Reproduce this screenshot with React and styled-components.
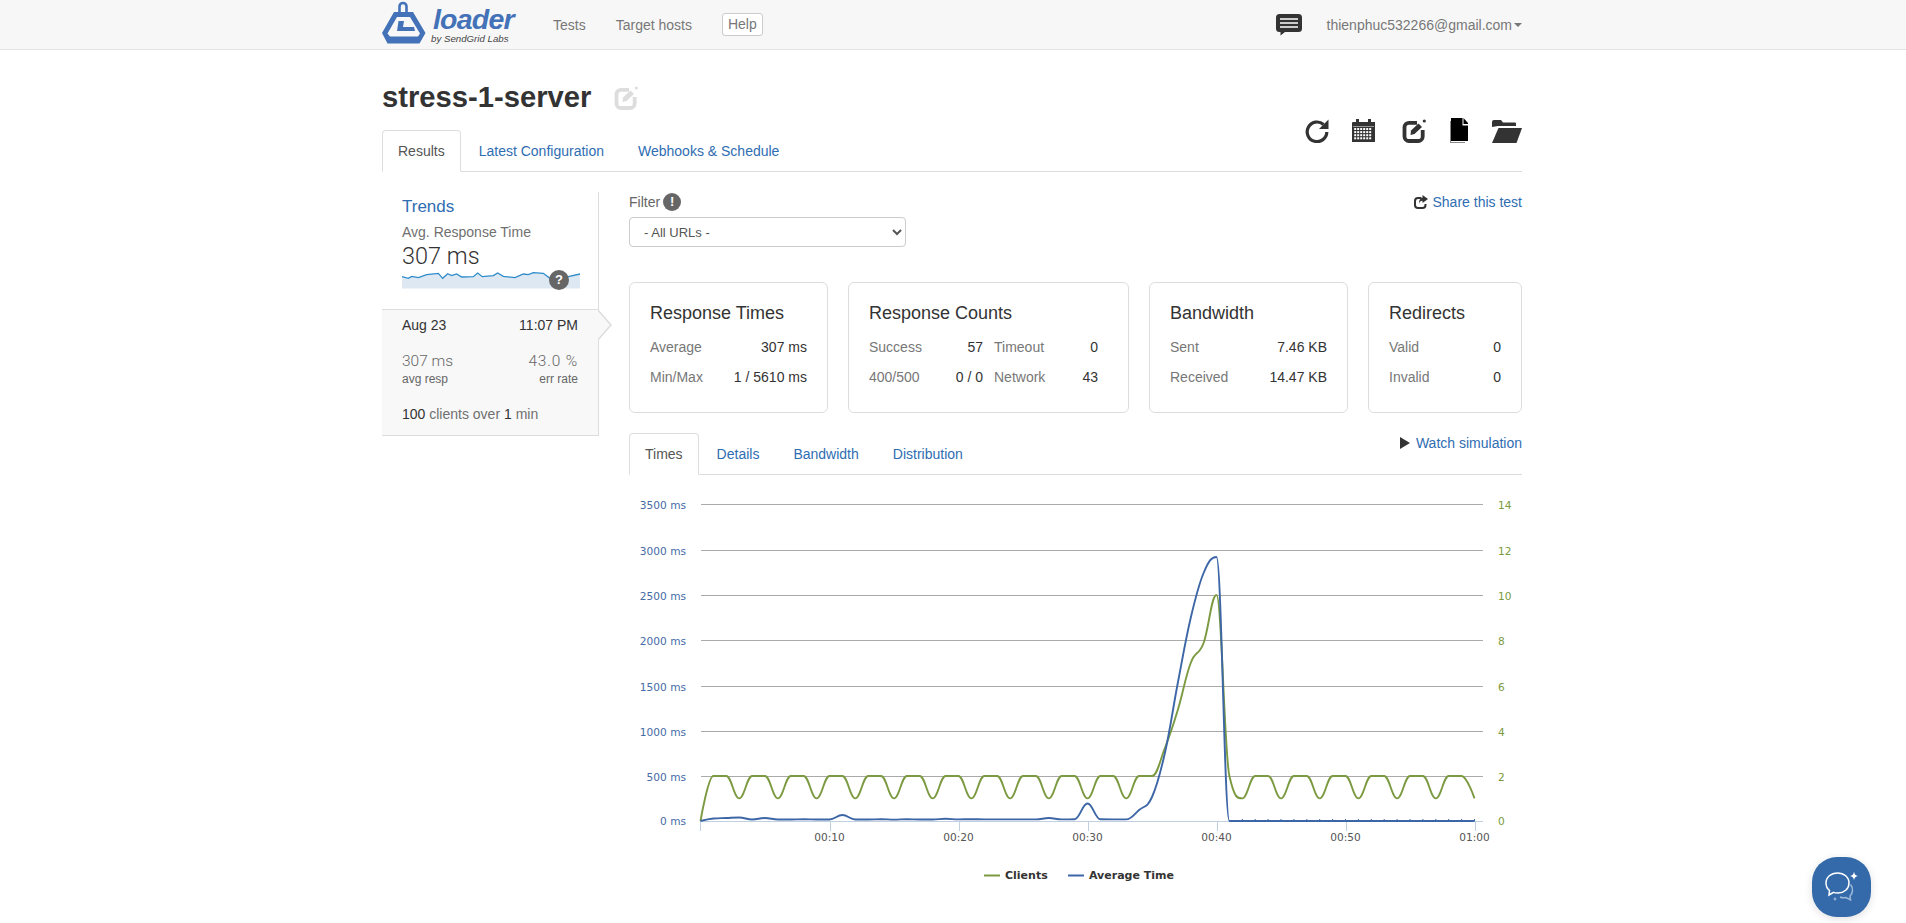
import React from 'react';
import styled, { createGlobalStyle } from 'styled-components';

const Global = createGlobalStyle`
  * { box-sizing: border-box; }
  html, body { margin: 0; background: #fff; }
  body { font-family: "Liberation Sans", Arial, sans-serif; font-size: 14px; line-height: 20px; color: #333; }
`;

const LINK = '#2f6db2';
const GREEN = '#7b9a41';
const BLUE = '#3d66a6';

const Container = styled.div`
  width: 1142px;
  margin: 0 auto;
  padding-right: 2px;
`;
const NavBar = styled.header`
  height: 50px;
  background: #f7f7f7;
  border-bottom: 1px solid #e3e3e3;
`;
const NavInner = styled(Container)`
  height: 49px;
  display: flex;
  align-items: center;
`;
const Logo = styled.div`
  display: flex;
  align-items: flex-start;
  width: 132px;
  height: 49px;
  margin-right: 39px;
`;
const LogoWords = styled.div`
  display: flex;
  flex-direction: column;
  margin-left: 7px;
  padding-top: 6px;
`;
const LogoName = styled.span`
  font-size: 28.5px;
  line-height: 27px;
  font-weight: 700;
  font-style: italic;
  letter-spacing: -0.8px;
  color: #4472b8;
`;
const LogoBy = styled.span`
  font-size: 9.7px;
  line-height: 12px;
  font-style: italic;
  color: #444;
  margin-left: -2px;
`;
const NavLinks = styled.nav`
  display: flex;
  align-items: center;
  gap: 30px;
`;
const NavLink = styled.a`
  color: #777;
`;
const HelpButton = styled.a`
  height: 23px;
  padding: 0 5px;
  line-height: 21px;
  color: #777;
  background: #fff;
  border: 1px solid #ccc;
  border-radius: 3px;
`;
const NavRight = styled.div`
  margin-left: auto;
  display: flex;
  align-items: center;
  gap: 25px;
`;
const Account = styled.a`
  display: flex;
  align-items: center;
  color: #777;
`;
const Caret = styled.span`
  width: 0;
  height: 0;
  margin-left: 2px;
  border-top: 4px solid #777;
  border-left: 4px solid transparent;
  border-right: 4px solid transparent;
`;
const Title = styled.div`
  display: flex;
  align-items: center;
  margin-top: 31px;
  margin-bottom: 16px;
  height: 33px;
`;
const TitleText = styled.h1`
  margin: 0;
  font-size: 29.2px;
  line-height: 33px;
  font-weight: 700;
  color: #333;
`;
const TitleEdit = styled.span`
  display: flex;
  margin-left: 23px;
  margin-top: 1px;
`;
const TabBar = styled.div`
  display: flex;
  justify-content: space-between;
  align-items: flex-start;
  height: 42px;
  border-bottom: 1px solid #ddd;
`;
const Tabs = styled.div`
  display: flex;
  gap: 2px;
`;
const Tab = styled.a`
  height: 42px;
  padding: 10px 15px;
  border: 1px solid ${p => (p.$active ? '#ddd' : 'transparent')};
  border-bottom-color: ${p => (p.$active ? '#fff' : 'transparent')};
  border-radius: 4px 4px 0 0;
  background: ${p => (p.$active ? '#fff' : 'transparent')};
  color: ${p => (p.$active ? '#555' : LINK)};
`;
const Toolbar = styled.div`
  display: flex;
  align-items: flex-start;
  margin-top: -12px;
`;
const ToolIcon = styled.span`
  display: flex;
  margin-left: ${p => p.$gap}px;
  margin-top: ${p => p.$top || 0}px;
`;
const Content = styled.div`
  display: flex;
  gap: 30px;
`;
const Side = styled.aside`
  width: 217px;
  flex: none;
  margin-top: 20px;
`;
const Trend = styled.div`
  height: 117px;
  padding: 5px 18px 0 20px;
  border-right: 1px solid #ddd;
`;
const TrendTitle = styled.a`
  display: block;
  font-size: 17px;
  line-height: 20px;
  color: ${LINK};
  margin-bottom: 5px;
`;
const TrendLabel = styled.div`
  color: #707070;
`;
const LightNumber = styled.div`
  font-family: Roboto, "Liberation Sans", sans-serif;
  font-weight: 300;
  font-size: ${p => p.$size}px;
  line-height: ${p => p.$line}px;
  letter-spacing: ${p => p.$spread || 0}px;
  color: ${p => p.$color};
`;
const Spark = styled.div`
  position: relative;
  width: 178px;
  height: 19px;
`;
const Badge = styled.span`
  position: ${p => (p.$over ? 'absolute' : 'static')};
  right: 11px;
  top: 0;
  width: ${p => p.$size}px;
  height: ${p => p.$size}px;
  border-radius: 50%;
  background: #666;
  color: #fff;
  font-size: 13px;
  font-weight: 700;
  line-height: ${p => p.$size}px;
  text-align: center;
`;
const Run = styled.div`
  position: relative;
  height: 127px;
  padding: 5px 20px 0 20px;
  background: #f8f8f8;
  border: 1px solid #ddd;
  border-left: 0;
  &::before, &::after {
    content: "";
    position: absolute;
    top: -1px;
    width: 0;
    height: 0;
    border-top: 16px solid transparent;
    border-bottom: 16px solid transparent;
  }
  &::before { left: 100%; border-left: 14px solid #ddd; }
  &::after { left: calc(100% - 2px); border-left: 14px solid #f8f8f8; }
`;
const RunRow = styled.div`
  display: flex;
  justify-content: space-between;
  margin-top: ${p => p.$top || 0}px;
`;
const RunSmall = styled.span`
  font-size: 12px;
  line-height: 16px;
  color: #666;
`;
const RunSummary = styled.div`
  margin-top: 17px;
  color: #707070;
  & b { font-weight: 400; color: #333; }
`;
const Main = styled.main`
  width: 893px;
  flex: none;
`;
const FilterRow = styled.div`
  display: flex;
  justify-content: space-between;
  margin-top: 20px;
`;
const FilterLabel = styled.div`
  display: flex;
  align-items: center;
  gap: 3px;
  color: #666;
`;
const InlineLink = styled.a`
  display: flex;
  align-items: center;
  gap: ${p => p.$gap}px;
  color: ${LINK};
`;
const Select = styled.select`
  display: block;
  width: 277px;
  height: 30px;
  margin-top: 5px;
  padding: 5px 10px;
  font-family: "Liberation Sans", Arial, sans-serif;
  font-size: 13px;
  color: #555;
  background: #fff;
  border: 1px solid #ccc;
  border-radius: 4px;
`;
const Cards = styled.div`
  display: flex;
  gap: 20px;
  margin-top: 35px;
  margin-bottom: 20px;
`;
const Card = styled.section`
  width: ${p => p.$w}px;
  height: 131px;
  padding: 20px;
  border: 1px solid #ddd;
  border-radius: 6px;
`;
const CardTitle = styled.h3`
  margin: 0 0 14px;
  font-size: 18px;
  line-height: 20px;
  font-weight: 400;
  color: #333;
`;
const StatGrid = styled.div`
  display: grid;
  grid-template-columns: ${p => p.$cols || '1fr'};
  column-gap: 11px;
  row-gap: 10px;
`;
const Stat = styled.div`
  display: flex;
  justify-content: space-between;
  color: #333;
`;
const StatLabel = styled.span`
  color: #777;
`;
const ChartSvg = styled.svg`
  display: block;
`;
const AxisText = styled.text`
  font-family: "DejaVu Sans", sans-serif;
  font-size: 10.6px;
  fill: ${p => p.$fill};
  text-anchor: ${p => p.$anchor};
`;
const LegendText = styled.text`
  font-family: "DejaVu Sans", sans-serif;
  font-size: 11px;
  font-weight: 700;
  fill: #333;
`;
const ChatWidget = styled.div`
  position: fixed;
  right: 35px;
  bottom: 6px;
  width: 59px;
  height: 60px;
  display: flex;
  background: #346aa9;
  border-radius: 25px;
  box-shadow: 0 2px 8px rgba(0, 0, 0, .12);
`;

const EditIcon = ({ size = 24, color = '#333' }) => (
  <svg width={size} height={size} viewBox="0 0 24 24" fill="none">
    <path d="M15 3.800H7A4.500 4.500 0 0 0 2.500 8.300v9.200A4.500 4.500 0 0 0 7 22h9.200a4.500 4.500 0 0 0 4.500-4.500V11" stroke={color} strokeWidth="3.800" />
    <path d="M9 11.500 16.500 4.500 20 8 12.500 15 8.500 16z" fill={color} />
    <circle cx="22.300" cy="2" r="1.600" fill={color} />
  </svg>
);
const RefreshIcon = () => (
  <svg width="24" height="25" viewBox="0 0 24 25" fill="none">
    <path d="M18.500 6.500A9.800 9.800 0 1 0 21.800 14" stroke="#333" strokeWidth="3.200" />
    <path d="M23.500 1.500v9.500h-9.500z" fill="#333" />
  </svg>
);
const CalendarIcon = () => {
  const cells = [];
  for (let r = 0; r < 4; r++) for (let c = 0; c < 6; c++) cells.push(<rect key={`${r}-${c}`} x={2.2 + c * 3} y={10 + r * 3.1} width="2" height="2" fill="#fff" />);
  return (
    <svg width="23" height="25" viewBox="0 0 23 25">
      <path d="M1 4h3V1h3v3h9V1h3v3h3a1 1 0 0 1 1 0v20H0V5a1 1 0 0 1 1-1z" fill="#333" />
      <rect x="1" y="8" width="21" height="1" fill="#fff" opacity=".5" />
      {cells}
    </svg>
  );
};
const FileIcon = () => (
  <svg width="19" height="25" viewBox="0 0 19 25">
    <path d="M0 3v22h15v-1H1V3z" fill="#888" />
    <path d="M1 0h11.500v7.500H18V23H1z" fill="#000" />
    <path d="M13.500 0 18 5v1h-4.500z" fill="#000" />
  </svg>
);
const FolderIcon = () => (
  <svg width="30" height="23" viewBox="0 0 30 23">
    <path d="M0 7V2a2 2 0 0 1 2-2h7l2 2.500h12a1 1 0 0 1 1 1V6H6z" fill="#333" />
    <path d="M6.500 8H30l-5.500 15H0z" fill="#333" />
  </svg>
);
const ChatIcon = () => (
  <svg width="26" height="22" viewBox="0 0 26 22">
    <path d="M3.500 0h19A3.500 3.500 0 0 1 26 3.500v11a3.500 3.500 0 0 1-3.500 3.500H9l-4.500 3.500V18h-1A3.500 3.500 0 0 1 0 14.500v-11A3.500 3.500 0 0 1 3.500 0z" fill="#333" />
    <path d="M4 5h18M4 9h18M4 13h18" stroke="#fff" strokeWidth="1.500" />
  </svg>
);
const ShareIcon = () => (
  <svg width="14" height="14" viewBox="0 0 14 14" fill="none">
    <path d="M7.500 3H4a3 3 0 0 0-3 3v4a3 3 0 0 0 3 3h4.500a3 3 0 0 0 3-3V9" stroke="#333" strokeWidth="2" />
    <path d="M8.500 0l5.500 4-5.500 4V5.800C6.500 5.800 5.500 7 5 9c-.2-3.500 1-5.800 3.500-6.200z" fill="#333" />
  </svg>
);
const PlayIcon = () => (
  <svg width="10" height="12" viewBox="0 0 10 12"><path d="M0 0l10 6-10 6z" fill="#333" /></svg>
);
const LogoMark = () => (
  <svg width="44" height="46" viewBox="0 0 44 46">
    <path d="M17.500 13V6.500a3.500 3.500 0 0 1 7 0V13" fill="none" stroke="#4472b8" strokeWidth="2.600" />
    <path fillRule="evenodd" fill="#4472b8" d="M12 12h19l12.500 21-6 10.500h-32L0 33zM15 17 5.500 33.500 8 36.500h28l2-3L28 17z" />
    <path fill="#4472b8" d="M16.500 21h5.500l-1 6h11l1 4H15z" />
  </svg>
);
const Sparkline = () => {
  const pts = [[21,125],[40,130],[50,124],[70,128],[95,119],[130,115],[143,130],[158,116],[170,122],[185,117],[200,126],[235,125],[248,114],[262,125],[295,122],[308,114],[325,124],[360,128],[385,117],[400,119],[415,113],[445,115],[465,130],[490,142],[520,125],[555,117]]
    .map(([x, y]) => [(x - 21) / 3, y / 3 - 35]);
  const line = pts.map(p => p.join(',')).join(' ');
  return (
    <svg width="178" height="19" viewBox="0 0 178 19">
      <polygon points={`0,18.500 ${line} 178,18.500`} fill="#dde8f2" />
      <polyline points={line} fill="none" stroke="#2e8bcb" strokeWidth="1.300" />
    </svg>
  );
};
const ChatBubbleIcon = () => (
  <svg width="59" height="60" viewBox="0 0 59 60" fill="none">
    <path d="M37 26c0 6-5 10-11 10-2 0-3 0-4.500-.6L17 38l.5-4.500C15 31.500 14 29 14 26c0-6 5-10 11.500-10S37 20 37 26z" stroke="#fff" strokeWidth="1.500" />
    <path d="M38.500 27.500c3 3.500 2.500 9-.5 11.500l.5 4-4.500-2.500c-2 .5-4 .5-6-.5" stroke="#9dbad9" strokeWidth="1.500" />
    <path d="M42 14.500c.5 3 1.500 4 4 4.500-2.500.5-3.500 1.500-4 4-.5-2.500-1.500-3.500-4-4 2.500-.5 3.500-1.500 4-4.500z" fill="#fff" />
    <path d="M23 39.500c.2 1.500.8 2.200 2.300 2.500-1.500.3-2.100 1-2.300 2.500-.2-1.500-.8-2.200-2.300-2.500 1.500-.3 2.100-1 2.300-2.500z" fill="#9dbad9" />
  </svg>
);

const X0 = 700.5, PXS = 12.9, Y0 = 821;
const xAt = t => X0 + t * PXS;

const spline = values => {
  const p = values.map((h, i) => [xAt(i), Y0 - h]);
  const s = 1.5, d = 2.5;
  let out = `M${p[0][0]} ${p[0][1]}`;
  let prevR = p[0];
  for (let i = 1; i < p.length; i++) {
    const [x, y] = p[i];
    let l = [x, y], r = [x, y];
    if (i < p.length - 1) {
      const [lx, ly] = p[i - 1], [nx, ny] = p[i + 1];
      const lcx = (s * x + lx) / d, rcx = (s * x + nx) / d;
      let lcy = (s * y + ly) / d, rcy = (s * y + ny) / d;
      const c = ((rcy - lcy) * (rcx - x)) / (rcx - lcx) + y - rcy;
      lcy += c; rcy += c;
      if (lcy > ly && lcy > y) { lcy = Math.max(ly, y); rcy = 2 * y - lcy; }
      else if (lcy < ly && lcy < y) { lcy = Math.min(ly, y); rcy = 2 * y - lcy; }
      if (rcy > ny && rcy > y) { rcy = Math.max(ny, y); lcy = 2 * y - rcy; }
      else if (rcy < ny && rcy < y) { rcy = Math.min(ny, y); lcy = 2 * y - rcy; }
      l = [lcx, lcy]; r = [rcx, rcy];
    }
    out += `C${prevR[0].toFixed(2)} ${prevR[1].toFixed(2)} ${l[0].toFixed(2)} ${l[1].toFixed(2)} ${x.toFixed(2)} ${y.toFixed(2)}`;
    prevR = r;
  }
  return out;
};

const clients = Array.from({ length: 61 }, (_, t) => (t % 3 === 0 ? 22.6 : 45));
clients[0] = 0; clients[36] = 73; clients[37] = 111; clients[38] = 158; clients[39] = 178; clients[40] = 226; clients[41] = 45;

const avg = [0,2.5,3,3.5,1.5,3,1.5,1.5,1.7,1.5,1.5,6,1.5,1.5,1.8,1.4,1.8,1.5,1.5,2.2,1.6,1.8,1.6,1.6,1.6,1.6,1.6,3,1.6,1.8,17.5,1.7,1.6,1.6,11,24,68,138,203,248,264,
  ...Array(20).fill(0)];

const GRID = [[504.5, '3500 ms', '14'], [550.5, '3000 ms', '12'], [595.5, '2500 ms', '10'], [640.5, '2000 ms', '8'], [686.5, '1500 ms', '6'], [731.5, '1000 ms', '4'], [776.5, '500 ms', '2']];
const TICKS = [[10, '00:10'], [20, '00:20'], [30, '00:30'], [40, '00:40'], [50, '00:50'], [60, '01:00']];

const Chart = () => (
  <ChartSvg width="893" height="420" viewBox="629 475 893 420" fill="none">
    {GRID.map(([y, l, r]) => (
      <g key={l}>
        <line x1="701" x2="1483" y1={y} y2={y} stroke="#aaa" />
        <AxisText x="686" y={y + 4.8} $fill="#466ba6" $anchor="end">{l}</AxisText>
        <AxisText x="1498" y={y + 4.8} $fill={GREEN} $anchor="start">{r}</AxisText>
      </g>
    ))}
    <AxisText x="686" y="825" $fill="#466ba6" $anchor="end">0 ms</AxisText>
    <AxisText x="1498" y="825" $fill={GREEN} $anchor="start">0</AxisText>
    <line x1="701" x2="1483" y1="821.500" y2="821.500" stroke="#c0d0e0" />
    <line x1="700.500" x2="700.500" y1="821" y2="831" stroke="#c0d0e0" />
    {TICKS.map(([t, l]) => (
      <g key={l}>
        <line x1={Math.round(xAt(t)) + 0.5} x2={Math.round(xAt(t)) + 0.5} y1="821" y2="831" stroke="#c0d0e0" />
        <AxisText x={xAt(t)} y="841" $fill="#555" $anchor="middle">{l}</AxisText>
      </g>
    ))}
    <path d={spline(clients)} stroke={GREEN} strokeWidth="1.900" />
    <path d={spline(avg)} stroke={BLUE} strokeWidth="1.900" />
    {Array.from({ length: 19 }, (_, i) => (
      <line key={i} x1={xAt(42 + i)} x2={xAt(42 + i)} y1="819" y2="821" stroke={BLUE} strokeWidth="1" />
    ))}
    <line x1="984" x2="1000" y1="875.500" y2="875.500" stroke={GREEN} strokeWidth="2" />
    <LegendText x="1005" y="879">Clients</LegendText>
    <line x1="1068" x2="1084" y1="875.500" y2="875.500" stroke={BLUE} strokeWidth="2" />
    <LegendText x="1089" y="879">Average Time</LegendText>
  </ChartSvg>
);

const StatRow = ({ label, value }) => (
  <Stat><StatLabel>{label}</StatLabel><span>{value}</span></Stat>
);

export default function App() {
  return (
    <>
      <Global />
      <NavBar>
        <NavInner>
          <Logo>
            <LogoMark />
            <LogoWords>
              <LogoName>loader</LogoName>
              <LogoBy>by SendGrid Labs</LogoBy>
            </LogoWords>
          </Logo>
          <NavLinks>
            <NavLink>Tests</NavLink>
            <NavLink>Target hosts</NavLink>
            <HelpButton>Help</HelpButton>
          </NavLinks>
          <NavRight>
            <ChatIcon />
            <Account>thienphuc532266@gmail.com<Caret /></Account>
          </NavRight>
        </NavInner>
      </NavBar>
      <Container>
        <Title>
          <TitleText>stress-1-server</TitleText>
          <TitleEdit><EditIcon color="#ddd" /></TitleEdit>
        </Title>
        <TabBar>
          <Tabs>
            <Tab $active>Results</Tab>
            <Tab>Latest Configuration</Tab>
            <Tab>Webhooks &amp; Schedule</Tab>
          </Tabs>
          <Toolbar>
            <ToolIcon $gap={0}><RefreshIcon /></ToolIcon>
            <ToolIcon $gap={23}><CalendarIcon /></ToolIcon>
            <ToolIcon $gap={27} $top={1}><EditIcon /></ToolIcon>
            <ToolIcon $gap={24}><FileIcon /></ToolIcon>
            <ToolIcon $gap={23} $top={2}><FolderIcon /></ToolIcon>
          </Toolbar>
        </TabBar>
        <Content>
          <Side>
            <Trend>
              <TrendTitle>Trends</TrendTitle>
              <TrendLabel>Avg. Response Time</TrendLabel>
              <LightNumber $size={23.5} $line={28} $color="#333">307 ms</LightNumber>
              <Spark>
                <Sparkline />
                <Badge $over $size={20}>?</Badge>
              </Spark>
            </Trend>
            <Run>
              <RunRow><span>Aug 23</span><span>11:07 PM</span></RunRow>
              <RunRow $top={16}>
                <LightNumber $size={15.5} $line={20} $color="#666">307 ms</LightNumber>
                <LightNumber $size={15.5} $line={20} $color="#666" $spread={0.8}>43.0 %</LightNumber>
              </RunRow>
              <RunRow><RunSmall>avg resp</RunSmall><RunSmall>err rate</RunSmall></RunRow>
              <RunSummary><b>100</b> clients over <b>1</b> min</RunSummary>
            </Run>
          </Side>
          <Main>
            <FilterRow>
              <FilterLabel>Filter <Badge $size={18}>!</Badge></FilterLabel>
              <InlineLink $gap={4.5}><ShareIcon />Share this test</InlineLink>
            </FilterRow>
            <Select defaultValue="all"><option value="all">- All URLs -</option></Select>
            <Cards>
              <Card $w={199}>
                <CardTitle>Response Times</CardTitle>
                <StatGrid>
                  <StatRow label="Average" value="307 ms" />
                  <StatRow label="Min/Max" value="1 / 5610 ms" />
                </StatGrid>
              </Card>
              <Card $w={281}>
                <CardTitle>Response Counts</CardTitle>
                <StatGrid $cols="114px 104px">
                  <StatRow label="Success" value="57" />
                  <StatRow label="Timeout" value="0" />
                  <StatRow label="400/500" value="0 / 0" />
                  <StatRow label="Network" value="43" />
                </StatGrid>
              </Card>
              <Card $w={199}>
                <CardTitle>Bandwidth</CardTitle>
                <StatGrid>
                  <StatRow label="Sent" value="7.46 KB" />
                  <StatRow label="Received" value="14.47 KB" />
                </StatGrid>
              </Card>
              <Card $w={154}>
                <CardTitle>Redirects</CardTitle>
                <StatGrid>
                  <StatRow label="Valid" value="0" />
                  <StatRow label="Invalid" value="0" />
                </StatGrid>
              </Card>
            </Cards>
            <TabBar>
              <Tabs>
                <Tab $active>Times</Tab>
                <Tab>Details</Tab>
                <Tab>Bandwidth</Tab>
                <Tab>Distribution</Tab>
              </Tabs>
              <InlineLink $gap={6}><PlayIcon />Watch simulation</InlineLink>
            </TabBar>
            <Chart />
          </Main>
        </Content>
      </Container>
      <ChatWidget><ChatBubbleIcon /></ChatWidget>
    </>
  );
}
